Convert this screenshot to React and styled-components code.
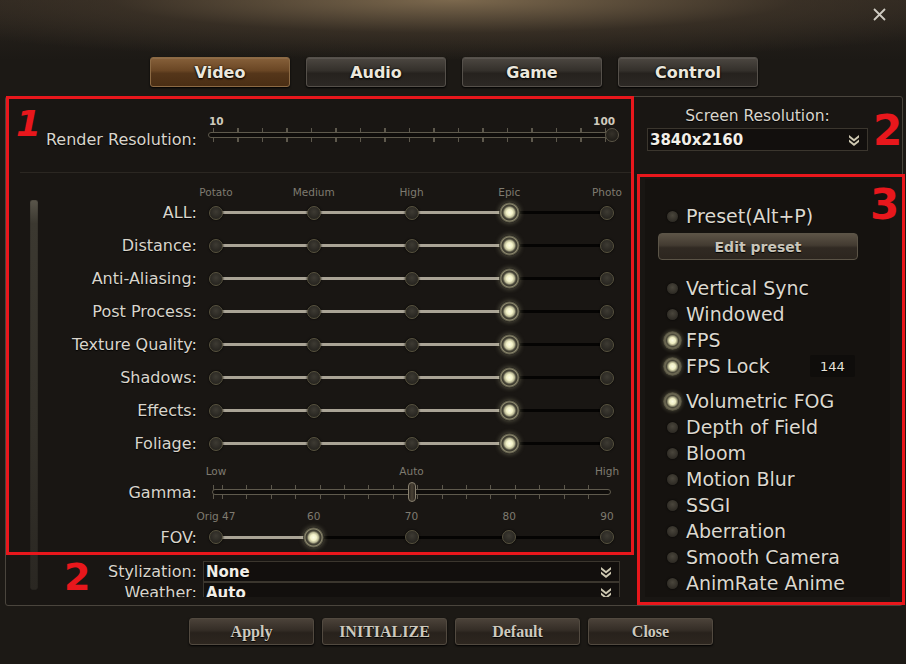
import React from "react";
import styled, { createGlobalStyle, css } from "styled-components";

const GlobalStyle = createGlobalStyle`
  html, body { margin: 0; padding: 0; background: #1c1915; }
  body { font-family: "DejaVu Sans", "Liberation Sans", sans-serif; }
  * { box-sizing: border-box; }
`;

const Screen = styled.div`
  position: relative;
  width: 906px;
  height: 664px;
  overflow: hidden;
  background:
    radial-gradient(ellipse 620px 60px at 50% 0, rgba(128,108,80,0.95), rgba(70,58,44,0.55) 55%, rgba(28,25,21,0) 100%),
    linear-gradient(#2a241e 0, #1c1915 60px);
  color: #dcd8cf;
`;

const TopBar = styled.div`
  height: 57px;
  display: flex;
  justify-content: flex-end;
  align-items: flex-start;
  padding: 7px 19px 0 0;
`;

const CloseButton = styled.div`
  width: 15px;
  height: 15px;
  display: flex;
`;

const TabRow = styled.div`
  display: flex;
  justify-content: center;
  gap: 16px;
  padding-left: 2px;
`;

const Tab = styled.div`
  width: 140px;
  height: 30px;
  border-radius: 3px;
  display: flex;
  align-items: center;
  justify-content: center;
  font-weight: bold;
  font-size: 16px;
  color: #ebe7dc;
  text-shadow: 0 1px 2px #000, 0 0 2px #000;
  border: 1px solid #55504a;
  background: linear-gradient(#4c4741, #34302b 45%, #26221e 55%, #2c2824);
  box-shadow: inset 0 1px 0 rgba(255,255,255,0.08), 0 1px 2px #000;
  ${(p) =>
    p.$active &&
    css`
      border-color: #8c6a44;
      background: linear-gradient(#86603a, #6a4624 45%, #55361a 55%, #4a2e14);
    `}
`;

const Main = styled.div`
  margin: 9px 3px 0 5px;
  height: 510px;
  display: flex;
  border: 1px solid #4a453d;
  border-radius: 3px;
  background: #191613;
`;

const LeftCol = styled.div`
  width: 627px;
  display: flex;
  flex-direction: column;
  overflow: hidden;
`;

const Grid = styled.div`
  display: grid;
  grid-template-columns: 162px 407px;
  column-gap: 8px;
  align-items: center;
  height: ${(p) => p.$h}px;
  margin-top: ${(p) => p.$mt || 0}px;
`;

const ResRow = styled.div`
  height: 76px;
  margin-left: 14px;
  padding-left: 18px;
  border-bottom: 1px solid #2b2722;
  display: grid;
  grid-template-columns: 162px 407px;
  column-gap: 8px;
  align-items: start;
`;

const Label = styled.div`
  text-align: right;
  padding-right: 3px;
  font-size: 16px;
  color: #d9d5cc;
  white-space: nowrap;
  text-shadow: 0 1px 1px #000;
  margin-top: ${(p) => p.$mt || 0}px;
`;

const TickSlider = styled.div`
  margin-top: ${(p) => p.$mt || 0}px;
  display: flex;
  flex-direction: column;
`;

const EndLabels = styled.div`
  display: flex;
  justify-content: space-between;
  font-size: 10.5px;
  font-weight: bold;
  color: #cfcabd;
  height: 13px;
  padding: 0 0 0 1px;
`;

const TickTrack = styled.div`
  position: relative;
  height: 14px;
  display: flex;
  align-items: center;
  background:
    repeating-linear-gradient(90deg, #5d584c 0 1px, transparent 1px ${(p) => p.$step}px);
  background-position: ${(p) => p.$offset}px 0;
  margin: 0 ${(p) => p.$inset}px;
`;

const Groove = styled.div`
  width: 100%;
  height: 6px;
  border-radius: 3px;
  border: 1px solid #5f5a4d;
  background: #0f0d0b;
`;

const RoundHandle = styled.div`
  position: absolute;
  right: -4px;
  top: 0;
  width: 14px;
  height: 14px;
  border-radius: 50%;
  background: radial-gradient(circle at 50% 40%, #36322a, #181612);
  border: 1px solid #5c5647;
`;

const PillHandle = styled.div`
  position: absolute;
  left: calc(50% - 4px);
  top: -3px;
  width: 8px;
  height: 20px;
  border-radius: 4px;
  background: linear-gradient(90deg, #2b2620, #4a4235, #2b2620);
  border: 1px solid #8a8270;
`;

const Body = styled.div`
  display: flex;
`;

const Scrollbar = styled.div`
  margin: 27px 0 0 24px;
  width: 8px;
  height: 390px;
  border-radius: 2px;
  background: linear-gradient(#5a564b, #3b3830 6%, #34312a 60%, #2a2722);
  box-shadow: inset 0 0 1px #000;
`;

const Content = styled.div`
  padding-top: 13px;
  display: flex;
  flex-direction: column;
`;

const StopLabels = styled.div`
  display: flex;
  justify-content: space-between;
`;

const StopLabel = styled.div`
  width: 16px;
  display: flex;
  justify-content: center;
  white-space: nowrap;
  font-size: 10.5px;
  color: #7f7b70;
  visibility: ${(p) => (p.$hidden ? "hidden" : "visible")};
`;

const StopSlider = styled.div`
  height: 100%;
  display: flex;
  justify-content: space-between;
  align-items: center;
  background: linear-gradient(
    to right,
    #aaa496 0,
    #aaa496 ${(p) => p.$fill}%,
    #050403 ${(p) => p.$fill}%,
    #050403 100%
  );
  background-size: calc(100% - 16px) 3px;
  background-position: center;
  background-repeat: no-repeat;
`;

const KnobSlot = styled.div`
  width: 16px;
  display: flex;
  justify-content: center;
  align-items: center;
`;

const Knob = styled.div`
  flex: none;
  width: 14px;
  height: 14px;
  border-radius: 50%;
  background: radial-gradient(circle at 50% 40%, #3e3b33, #1f1d19);
  border: 1px solid #57523f;
  box-shadow: 0 0 2px #000;
  ${(p) =>
    p.$active &&
    css`
      width: 21px;
      height: 21px;
      border: none;
      background: radial-gradient(
        circle,
        #fdfde6 0,
        #f2f1c8 3px,
        #b9b794 5px,
        #4e4c3d 6.5px,
        #3a382e 7.5px,
        #8a866c 8.5px,
        #5d5a48 9.5px,
        #2a2822 10.5px
      );
      box-shadow: 0 0 5px rgba(230, 228, 180, 0.35);
    `}
`;

const StyleBlock = styled.div`
  margin-top: 11px;
  height: 36px;
  overflow: hidden;
`;

const StyleRow = styled.div`
  display: grid;
  grid-template-columns: 162px 417px;
  column-gap: 3px;
  align-items: center;
  height: 21px;
`;

const Dropdown = styled.div`
  height: ${(p) => p.$h || 20}px;
  width: ${(p) => (p.$w ? p.$w + "px" : "auto")};
  margin-top: ${(p) => p.$mt || 0}px;
  border: 1px solid #3b362e;
  background: #120f0d;
  display: flex;
  align-items: center;
  justify-content: space-between;
  padding: 0 6px 0 2px;
  font-weight: bold;
  font-size: 15px;
  color: #f2efe8;
  text-shadow: 0 1px 1px #000;
`;

const Chevron = styled.svg`
  width: 14px;
  height: 14px;
  flex: none;
`;

const RightCol = styled.div`
  flex: 1;
  display: flex;
  flex-direction: column;
`;

const ResBlock = styled.div`
  width: 221px;
  margin-left: 14px;
  display: flex;
  flex-direction: column;
  align-items: center;
`;

const ResTitle = styled.div`
  margin-top: 10px;
  height: 18px;
  line-height: 18px;
  font-size: 15.5px;
  color: #d9d5cc;
  text-shadow: 0 1px 1px #000;
`;

const OptionsPanel = styled.div`
  margin: 28px 0 0 12px;
  width: 245px;
  height: 418px;
  padding-top: 24px;
  background: #15120f;
  display: flex;
  flex-direction: column;
`;

const Option = styled.div`
  height: 26px;
  display: flex;
  align-items: center;
  padding-left: 17px;
  gap: 4px;
  font-size: 19px;
  color: #dcd8cf;
  text-shadow: 0 1px 1px #000;
  margin-top: ${(p) => p.$mt || 0}px;
  white-space: nowrap;
`;

const RadioSlot = styled.div`
  width: 20px;
  display: flex;
  justify-content: center;
  align-items: center;
`;

const Radio = styled.div`
  flex: none;
  width: 11px;
  height: 11px;
  border-radius: 50%;
  background: radial-gradient(circle at 50% 40%, #4a463c, #24211c);
  box-shadow: 0 0 2px #000;
  ${(p) =>
    p.$on &&
    css`
      width: 19px;
      height: 19px;
      background: radial-gradient(
        circle,
        #fbfbe2 0,
        #eeedc2 3px,
        #a9a785 4.5px,
        #4a4839 6px,
        #6f6b55 7.5px,
        #4a4737 9.5px
      );
      box-shadow: 0 0 4px rgba(220, 218, 170, 0.3);
    `}
`;

const LockValue = styled.div`
  margin-left: auto;
  margin-right: 35px;
  width: 45px;
  height: 22px;
  background: #0f0d0b;
  border-radius: 2px;
  display: flex;
  align-items: center;
  justify-content: center;
  font-size: 13px;
  color: #e6e3da;
`;

const EditButton = styled.div`
  margin: 4px 0 0 13px;
  width: 200px;
  height: 27px;
  border-radius: 4px;
  border: 1px solid #5b5447;
  background: linear-gradient(#5c5346, #433b31 45%, #312a23 55%, #2c261f);
  display: flex;
  align-items: center;
  justify-content: center;
  font-weight: bold;
  font-size: 14px;
  color: #c9c5ba;
  text-shadow: 0 1px 1px #000;
`;

const ButtonRow = styled.div`
  margin-top: 12px;
  display: flex;
  justify-content: center;
  gap: 8px;
  padding-right: 4px;
`;

const ActionButton = styled.div`
  width: 125px;
  height: 27px;
  border-radius: 3px;
  border: 1px solid #524a40;
  background: linear-gradient(#4b4239, #342d26 45%, #28221c 55%, #2d261f);
  box-shadow: 0 1px 2px #000;
  display: flex;
  align-items: center;
  justify-content: center;
  font-family: "Liberation Serif", serif;
  font-weight: bold;
  font-size: 16px;
  color: #cdc9be;
  text-shadow: 0 1px 1px #000;
`;

/* red annotation overlay (drawn on top of the screenshot) */
const AnnoBox = styled.div`
  position: absolute;
  left: ${(p) => p.$x}px;
  top: ${(p) => p.$y}px;
  width: ${(p) => p.$w}px;
  height: ${(p) => p.$h}px;
  border: 3px solid #e8171c;
  pointer-events: none;
`;

const AnnoNum = styled.div`
  position: absolute;
  left: ${(p) => p.$x}px;
  top: ${(p) => p.$y}px;
  font-family: "DejaVu Sans", sans-serif;
  font-weight: bold;
  font-style: ${(p) => (p.$italic ? "italic" : "normal")};
  font-size: ${(p) => p.$size || 40}px;
  line-height: 1;
  color: #e8171c;
  pointer-events: none;
`;

const ChevronIcon = () => (
  <Chevron viewBox="0 0 14 14">
    <path d="M2 2 L7 6 L12 2 L12 4.5 L7 8.5 L2 4.5 Z" fill="#cfc9b2" />
    <path d="M2 6.5 L7 10.5 L12 6.5 L12 9 L7 13 L2 9 Z" fill="#cfc9b2" />
  </Chevron>
);

const Stops = ({ value, fill }) => (
  <StopSlider $fill={fill}>
    {[0, 1, 2, 3, 4].map((i) => (
      <KnobSlot key={i}>
        <Knob $active={i === value} />
      </KnobSlot>
    ))}
  </StopSlider>
);

const quality = [
  "ALL:",
  "Distance:",
  "Anti-Aliasing:",
  "Post Process:",
  "Texture Quality:",
  "Shadows:",
  "Effects:",
  "Foliage:",
];

const options = [
  { t: "Vertical Sync", on: false },
  { t: "Windowed", on: false },
  { t: "FPS", on: true },
  { t: "FPS Lock", on: true, lock: "144" },
  { t: "Volumetric FOG", on: true, mt: 9 },
  { t: "Depth of Field", on: false },
  { t: "Bloom", on: false },
  { t: "Motion Blur", on: false },
  { t: "SSGI", on: false },
  { t: "Aberration", on: false },
  { t: "Smooth Camera", on: false },
  { t: "AnimRate Anime", on: false },
];

export default function App() {
  return (
    <>
      <GlobalStyle />
      <Screen>
        <TopBar>
          <CloseButton>
            <svg viewBox="0 0 15 15" width="15" height="15">
              <path d="M2 2 L13 13 M13 2 L2 13" stroke="#cfcbc2" strokeWidth="1.8" />
            </svg>
          </CloseButton>
        </TopBar>

        <TabRow>
          <Tab $active>Video</Tab>
          <Tab>Audio</Tab>
          <Tab>Game</Tab>
          <Tab>Control</Tab>
        </TabRow>

        <Main>
          <LeftCol>
            <ResRow>
              <Label $mt={33}>Render Resolution:</Label>
              <TickSlider $mt={18}>
                <EndLabels>
                  <span>10</span>
                  <span>100</span>
                </EndLabels>
                <TickTrack $step={24.5} $offset={5} $inset={0}>
                  <Groove />
                  <RoundHandle />
                </TickTrack>
              </TickSlider>
            </ResRow>

            <Body>
              <Scrollbar />
              <Content>
                <Grid $h={10}>
                  <span />
                  <StopLabels>
                    {["Potato", "Medium", "High", "Epic", "Photo"].map((l) => (
                      <StopLabel key={l}>{l}</StopLabel>
                    ))}
                  </StopLabels>
                </Grid>
                {quality.map((q) => (
                  <Grid key={q} $h={33}>
                    <Label>{q}</Label>
                    <Stops value={3} fill={75} />
                  </Grid>
                ))}

                <Grid $h={16} $mt={3}>
                  <span />
                  <StopLabels>
                    <StopLabel>Low</StopLabel>
                    <StopLabel $hidden>.</StopLabel>
                    <StopLabel>Auto</StopLabel>
                    <StopLabel $hidden>.</StopLabel>
                    <StopLabel>High</StopLabel>
                  </StopLabels>
                </Grid>
                <Grid $h={26}>
                  <Label>Gamma:</Label>
                  <TickSlider>
                    <TickTrack $step={24.4} $offset={10} $inset={4}>
                      <Groove />
                      <PillHandle />
                    </TickTrack>
                  </TickSlider>
                </Grid>

                <Grid $h={16} $mt={3}>
                  <span />
                  <StopLabels>
                    {["Orig 47", "60", "70", "80", "90"].map((l) => (
                      <StopLabel key={l}>{l}</StopLabel>
                    ))}
                  </StopLabels>
                </Grid>
                <Grid $h={26}>
                  <Label>FOV:</Label>
                  <Stops value={1} fill={25} />
                </Grid>

                <StyleBlock>
                  <StyleRow>
                    <Label>Stylization:</Label>
                    <Dropdown $h={21}>
                      <span>None</span>
                      <ChevronIcon />
                    </Dropdown>
                  </StyleRow>
                  <StyleRow>
                    <Label>Weather:</Label>
                    <Dropdown $h={21}>
                      <span>Auto</span>
                      <ChevronIcon />
                    </Dropdown>
                  </StyleRow>
                </StyleBlock>
              </Content>
            </Body>
          </LeftCol>

          <RightCol>
            <ResBlock>
              <ResTitle>Screen Resolution:</ResTitle>
              <Dropdown $h={23} $w={221} $mt={3}>
                <span>3840x2160</span>
                <ChevronIcon />
              </Dropdown>
            </ResBlock>

            <OptionsPanel>
              <Option>
                <RadioSlot>
                  <Radio />
                </RadioSlot>
                Preset(Alt+P)
              </Option>
              <EditButton>Edit preset</EditButton>
              {options.map((o, i) => (
                <Option key={o.t} $mt={i === 0 ? 15 : o.mt}>
                  <RadioSlot>
                    <Radio $on={o.on} />
                  </RadioSlot>
                  {o.t}
                  {o.lock && <LockValue>{o.lock}</LockValue>}
                </Option>
              ))}
            </OptionsPanel>
          </RightCol>
        </Main>

        <ButtonRow>
          <ActionButton>Apply</ActionButton>
          <ActionButton>INITIALIZE</ActionButton>
          <ActionButton>Default</ActionButton>
          <ActionButton>Close</ActionButton>
        </ButtonRow>

        <AnnoBox $x={6} $y={96} $w={628} $h={459} />
        <AnnoBox $x={637} $y={174} $w={268} $h={431} />
        <AnnoNum $x={16} $y={106} $size={36} $italic>1</AnnoNum>
        <AnnoNum $x={873} $y={110} $size={42}>2</AnnoNum>
        <AnnoNum $x={870} $y={184} $size={42}>3</AnnoNum>
        <AnnoNum $x={64} $y={558} $size={38}>2</AnnoNum>
      </Screen>
    </>
  );
}
